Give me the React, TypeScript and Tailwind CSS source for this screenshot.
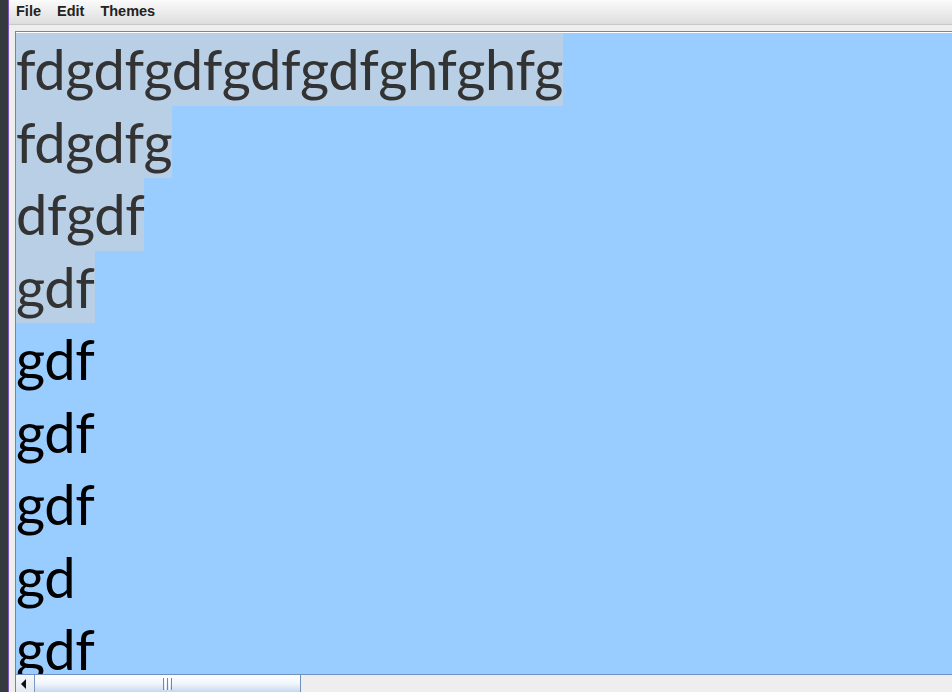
export default function App() {
  const lines = [
    { text: 'fdgdfgdfgdfgdfghfghfg', selected: true },
    { text: 'fdgdfg', selected: true },
    { text: 'dfgdf', selected: true },
    { text: 'gdf', selected: true },
    { text: 'gdf', selected: false },
    { text: 'gdf', selected: false },
    { text: 'gdf', selected: false },
    { text: 'gd', selected: false },
    { text: 'gdf', selected: false },
  ];

  return (
    <div className="flex h-[692px] w-[952px] overflow-hidden bg-[#eeeeee]">
      <div className="w-[8px] bg-[#353a3d]" />
      <div className="w-px bg-[#7b52c6]" />
      <div className="flex min-w-0 flex-1 flex-col">
        {/* menu bar */}
        <div className="flex h-[25px] shrink-0 items-center border-b border-[#c9c9c9] bg-gradient-to-b from-[#fbfbfb] to-[#dddddd] font-['Liberation_Sans',Arial,sans-serif] text-[14.5px] font-bold text-[#222]">
          <span className="pl-[7px] pr-[8px]">File</span>
          <span className="px-[8px]">Edit</span>
          <span className="px-[8px]">Themes</span>
        </div>

        <div className="flex min-h-0 flex-1 flex-col pl-[6px] pt-[6px]">
          <div className="flex min-h-0 flex-1 flex-col border-l border-t border-[#7a8591]">
            {/* text area */}
            <div className="min-h-0 flex-1 overflow-hidden border-t border-white bg-[#99ccff] font-['Lato',sans-serif] text-[56px] leading-[72.5px] tracking-[-0.4px]">
              {lines.map((l, i) => (
                <div
                  key={i}
                  className={
                    l.selected
                      ? 'w-fit whitespace-pre bg-[#b8cfe5] text-[#333333]'
                      : 'w-fit whitespace-pre text-black'
                  }
                >
                  {l.text}
                </div>
              ))}
            </div>

            {/* horizontal scrollbar */}
            <div className="flex h-[18px] shrink-0 border-t border-[#7090c0] bg-[#eeeeee]">
              <div className="flex w-[19px] items-center justify-start border-r border-[#7a9ac4] bg-gradient-to-b from-[#f6f8fb] to-[#e3e9f1] pl-[5px]">
                <svg width="6" height="10" viewBox="0 0 6 10">
                  <path d="M5 0 L0 5 L5 10 Z" fill="#111" />
                </svg>
              </div>
              <div className="flex w-[266px] items-center justify-center border-r border-[#7090c0] bg-gradient-to-b from-[#ffffff] via-[#f2f6fb] to-[#c6d8ee]">
                <div className="flex gap-[1px]">
                  <div className="h-[12px] w-px bg-[#6b86c0]" />
                  <div className="h-[12px] w-px bg-white" />
                  <div className="h-[12px] w-px bg-[#6b86c0]" />
                  <div className="h-[12px] w-px bg-white" />
                  <div className="h-[12px] w-px bg-[#6b86c0]" />
                </div>
              </div>
              <div className="flex-1 bg-[#eeeeee]" />
            </div>
          </div>
        </div>
      </div>
    </div>
  );
}
